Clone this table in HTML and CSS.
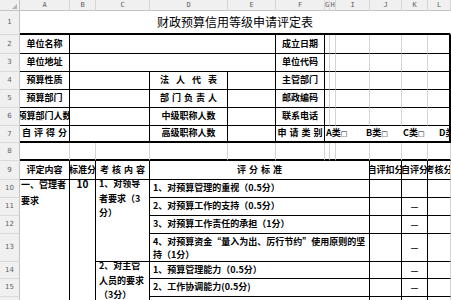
FILE: index.html
```html
<!DOCTYPE html>
<html lang="zh-CN">
<head>
<meta charset="utf-8">
<title>财政预算信用等级申请评定表</title>
<link rel="stylesheet" href="styles.css">
</head>
<body>
<div class="sheet">
  <div class="hd corner"><span class="tri"></span></div>
  <div class="hd col">A</div><div class="hd col">B</div><div class="hd col">C</div><div class="hd col">D</div><div class="hd col">E</div><div class="hd col">F</div><div class="hd col">G</div><div class="hd col">H</div><div class="hd col">I</div><div class="hd col">J</div><div class="hd col">K</div><div class="hd col">L</div>

  <div class="hd row">1</div>
  <div class="c title s12 tb nr">财政预算信用等级申请评定表</div>

  <div class="hd row">2</div>
  <div class="c bk">单位名称</div>
  <div class="c bk s4"></div>
  <div class="c bk">成立日期</div>
  <div class="c bb"></div><div class="c bb"></div><div class="c bb"></div><div class="c bb"></div><div class="c bb"></div><div class="c bb tr"></div>

  <div class="hd row">3</div>
  <div class="c bk">单位地址</div>
  <div class="c bk s4"></div>
  <div class="c bk">单位代码</div>
  <div class="c bb"></div><div class="c bb"></div><div class="c bb"></div><div class="c bb"></div><div class="c bb"></div><div class="c bb tr"></div>

  <div class="hd row">4</div>
  <div class="c bk">预算性质</div>
  <div class="c bk s2"></div>
  <div class="c bk sp wide">法 人 代 表</div>
  <div class="c bk"></div>
  <div class="c bk">主管部门</div>
  <div class="c bb"></div><div class="c bb"></div><div class="c bb"></div><div class="c bb"></div><div class="c bb"></div><div class="c bb tr"></div>

  <div class="hd row">5</div>
  <div class="c bk">预算部门</div>
  <div class="c bk s2"></div>
  <div class="c bk sp">部 门 负 责 人</div>
  <div class="c bk"></div>
  <div class="c bk">邮政编码</div>
  <div class="c bb"></div><div class="c bb"></div><div class="c bb"></div><div class="c bb"></div><div class="c bb"></div><div class="c bb tr"></div>

  <div class="hd row">6</div>
  <div class="c bk">预算部门人数</div>
  <div class="c bk s2"></div>
  <div class="c bk">中级职称人数</div>
  <div class="c bk"></div>
  <div class="c bk">联系电话</div>
  <div class="c bb"></div><div class="c bb"></div><div class="c bb"></div><div class="c bb"></div><div class="c bb"></div><div class="c bb tr"></div>

  <div class="hd row">7</div>
  <div class="c bk tb sp">自 评 得 分</div>
  <div class="c bk tb s2"></div>
  <div class="c bk tb">高级职称人数</div>
  <div class="c bk tb"></div>
  <div class="c bk tb sp">申 请 类 别</div>
  <div class="c tb tr s6 opts"><span class="opt w40">A类<span class="box">□</span></span><span class="opt w37">B类<span class="box">□</span></span><span class="opt w36">C类<span class="box">□</span></span><span class="opt">D类<span class="box">□</span></span></div>

  <div class="hd row">8</div>
  <div class="c tb"></div><div class="c tb"></div><div class="c tb"></div><div class="c tb"></div><div class="c tb"></div><div class="c tb"></div><div class="c tb"></div><div class="c tb"></div><div class="c tb"></div><div class="c tb"></div><div class="c tb"></div><div class="c tb"></div>

  <div class="hd row">9</div>
  <div class="c bk">评定内容</div>
  <div class="c bk">标准分</div>
  <div class="c bk sp">考 核 内 容</div>
  <div class="c bk s6 sp">评 分 标 准</div>
  <div class="c bk">自评扣分</div>
  <div class="c bk">自评分</div>
  <div class="c bb">考核分</div>

  <div class="hd row">10</div>
  <div class="c bk r7 top wrap pa"><span class="tx ta">一、管理者要求</span></div>
  <div class="c bk r7 top"><span class="tx num">10</span></div>
  <div class="c bk r4 top wrap pc"><span class="tx">1、对领导者要求（3分）</span></div>
  <div class="c bk s6 left">1、对预算管理的重视（0.5分）</div>
  <div class="c bk"></div><div class="c bk"></div><div class="c bb"></div>

  <div class="hd row">11</div>
  <div class="c bk s6 left">2、对预算工作的支持（0.5分）</div>
  <div class="c bk"></div><div class="c bk"><span class="dash">—</span></div><div class="c bb"></div>

  <div class="hd row">12</div>
  <div class="c bk s6 left">3、对预算工作责任的承担（1分）</div>
  <div class="c bk"></div><div class="c bk"><span class="dash">—</span></div><div class="c bb"></div>

  <div class="hd row">13</div>
  <div class="c bk s6 left wrap two">4、对预算资金“量入为出、厉行节约”使用原则的坚持（1分）</div>
  <div class="c bk"></div><div class="c bk"><span class="dash">—</span></div><div class="c bb"></div>

  <div class="hd row">14</div>
  <div class="c bk r3 top wrap pc"><span class="tx">2、对主管人员的要求（3分）</span></div>
  <div class="c bk s6 left">1、预算管理能力（0.5分）</div>
  <div class="c bk"></div><div class="c bk"><span class="dash">—</span></div><div class="c bb"></div>

  <div class="hd row">15</div>
  <div class="c bk s6 left">2、工作协调能力(0.5分)</div>
  <div class="c bk"></div><div class="c bk"><span class="dash">—</span></div><div class="c bb"></div>

  <div class="hd row">16</div>
  <div class="c bk s6"></div>
  <div class="c bk"></div><div class="c bk"></div><div class="c bb"></div>
</div>
</body>
</html>
```

FILE: styles.css
```css
html, body {
  margin: 0;
  padding: 0;
  background: #ffffff;
  overflow: hidden;
}

.sheet {
  display: grid;
  grid-template-columns: 20px 50px 26px 54px 78px 48px 49px 5px 6px 34px 32px 26px 23px;
  grid-template-rows: 11px 24px 19px 18px 18px 18px 18px 17px 18px 19px 18px 18px 18px 28px 17px 18px 18px;
  width: 451px;
  height: 300px;
  overflow: hidden;
}

/* headers */
.hd {
  box-sizing: border-box;
  background: #f0f0f0;
  color: #606060;
  display: flex;
  align-items: center;
  justify-content: center;
  overflow: hidden;
}
.hd.col {
  font: 7px/1 "DejaVu Sans Mono", monospace;
  border-right: 1px solid #d6d6d6;
  border-bottom: 1px solid #c4c4c4;
}
.hd.row {
  font: 7px/1 "DejaVu Sans", sans-serif;
  border-right: 1px solid #c4c4c4;
  border-bottom: 1px solid #dadada;
}
.hd.corner {
  border-right: 1px solid #c4c4c4;
  border-bottom: 1px solid #c4c4c4;
  justify-content: flex-end;
  align-items: flex-end;
  padding: 0 2px 1px 0;
}
.tri {
  width: 0;
  height: 0;
  border-left: 5px solid transparent;
  border-bottom: 5px solid #b4b4b4;
}

/* cells */
.c {
  box-sizing: border-box;
  border-right: 1px solid #d4d4d4;
  border-bottom: 1px solid #d4d4d4;
  display: flex;
  align-items: center;
  justify-content: center;
  overflow: hidden;
  white-space: nowrap;
  font: bold 9px/1.2 "Noto Sans CJK SC", "Liberation Sans", sans-serif;
  color: #000;
  min-width: 0;
}
.bk { border-right-color: #000; border-bottom-color: #000; }
.bb { border-bottom-color: #000; }
.tb { border-bottom: 2px solid #000; }
.tr { border-right: 2px solid #000; }
.nr { border-right-color: transparent; }

.s2 { grid-column: span 2; }
.s4 { grid-column: span 4; }
.s6 { grid-column: span 6; }
.s12 { grid-column: span 12; }
.r3 { grid-row: span 3; }
.r4 { grid-row: span 4; }
.r7 { grid-row: span 7; }

.title {
  font: 400 12px/1 "Noto Sans CJK SC", sans-serif;
}

.sp { word-spacing: 1px; }
.sp.wide { word-spacing: 5px; }

.left {
  justify-content: flex-start;
  padding: 0 2px 0 3px;
}
.top { align-items: flex-start; }
.wrap { white-space: normal; }
.pa { padding: 0 1px; }
.pc { padding: 0 3px; }
.tx {
  line-height: 14.5px;
  margin-top: -3px;
}
.tx.ta { line-height: 15.5px; }
.num { font-size: 10px; }
.two { line-height: 13px; }

.dash {
  font: bold 7px/1 "Liberation Sans", sans-serif;
}

.opts {
  justify-content: flex-start;
  padding-left: 1px;
}
.opt { flex: none; }
.w40 { width: 40px; }
.w37 { width: 37px; }
.w36 { width: 36px; }
.box {
  font: 7px/1 "DejaVu Sans", sans-serif;
}
```
